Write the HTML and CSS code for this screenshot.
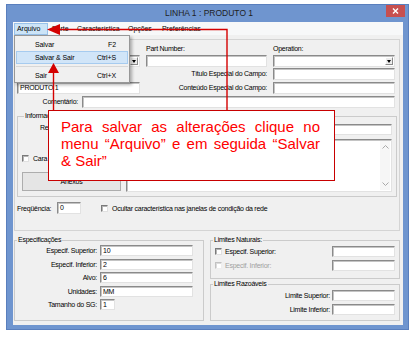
FILE: index.html
```html
<!DOCTYPE html>
<html lang="pt-BR">
<head>
    <meta charset="UTF-8">
    <title>LINHA 1 : PRODUTO 1</title>
    <link rel="stylesheet" href="styles.css">
</head>
<body>
<div class="window">
    <div class="titlebar">
        <div class="title">LINHA 1 : PRODUTO 1</div>
        <div class="close">
            <svg width="19" height="12" viewBox="0 0 19 12"><path d="M7 3.5L12 8.5M12 3.5L7 8.5" stroke="#fff" stroke-width="1.4"/></svg>
        </div>
    </div>
    <div class="client">
        <div class="menubar">
            <span class="mi mi-open">Arquivo</span>
            <span class="mi" style="width: 25px;">Parte</span>
            <span class="mi" style="width: 51px;">Característica</span>
            <span class="mi" style="width: 34px;">Opções</span>
            <span class="mi" style="width: 47px;">Preferências</span>
        </div>

        <!-- menu Arquivo aberto -->
        <div class="menu">
            <div class="item"><span>Salvar</span><span>F2</span></div>
            <div class="item on"><span>Salvar &amp; Sair</span><span>Ctrl+S</span></div>
            <div class="sep"></div>
            <div class="item"><span>Sair</span><span>Ctrl+X</span></div>
        </div>

        <div class="panel">
            <div class="grid3 labels"><span></span><span>Part Number:</span><span>Operation:</span></div>
            <div class="grid3 fields">
                <div class="edit combo"><span class="cbtn"></span></div>
                <div class="edit"></div>
                <div class="edit combo"><span class="cbtn"></span></div>
            </div>
            <div class="grid3 fields tight">
                <span></span>
                <span class="lbl-r">Título Especial do Campo:</span>
                <div class="edit"></div>
            </div>
            <div class="grid3 fields">
                <div class="edit">PRODUTO 1</div>
                <span class="lbl-r">Conteúdo Especial do Campo:</span>
                <div class="edit"></div>
            </div>
            <div class="comment-row">
                <span class="lbl-r">Comentário:</span>
                <div class="edit"></div>
            </div>

            <fieldset class="info">
                <legend>Informações</legend>
                <div class="info-grid">
                    <!-- o balão cobre o resto destes textos -->
                    <div class="info-left">
                        <span class="rlabel">Re</span>
                        <div class="ck-row"><span class="check"></span><span class="ck-text">Cara</span></div>
                        <div class="btn">Anexos</div>
                    </div>
                    <div class="info-right">
                        <div class="edit short"></div>
                        <div class="edit memo">
                            <div class="vscroll">
                                <svg width="7" height="4" viewBox="0 0 7 4"><polyline points="0.5,3.5 3.5,0.5 6.5,3.5" fill="none" stroke="#a8a8a8"/></svg>
                                <svg width="7" height="4" viewBox="0 0 7 4"><polyline points="0.5,0.5 3.5,3.5 6.5,0.5" fill="none" stroke="#a8a8a8"/></svg>
                            </div>
                        </div>
                    </div>
                </div>
            </fieldset>

            <div class="freq">
                <span class="flabel">Freqüência:</span>
                <div class="edit">0</div>
                <span class="check"></span>
                <span class="ck-text">Ocultar característica nas janelas de condição da rede</span>
            </div>
        </div>

        <div class="bottom">
            <fieldset class="specs">
                <legend>Especificações</legend>
                <div class="spec-grid">
                    <span>Especif. Superior:</span><div class="edit">10</div>
                    <span>Especif. Inferior:</span><div class="edit">2</div>
                    <span>Alvo:</span><div class="edit">6</div>
                    <span>Unidades:</span><div class="edit">MM</div>
                    <span>Tamanho do SG:</span><div class="edit sg">1</div>
                </div>
            </fieldset>
            <div class="limits">
                <fieldset class="nat">
                    <legend>Limites Naturais:</legend>
                    <div class="lim-row"><span class="check"></span><span class="ck-text">Especif. Superior:</span><div class="edit"></div></div>
                    <div class="lim-row off"><span class="check"></span><span class="ck-text">Especif. Inferior:</span><div class="edit"></div></div>
                </fieldset>
                <fieldset class="raz">
                    <legend>Limites Razoáveis</legend>
                    <div class="lim-row"><span class="rl">Limite Superior:</span><div class="edit"></div></div>
                    <div class="lim-row"><span class="rl">Limite Inferior:</span><div class="edit"></div></div>
                </fieldset>
            </div>
        </div>
    </div>
</div>

<div class="callout">Para salvar as alterações clique no menu “Arquivo” e em seguida “Salvar &amp; Sair”</div>

<svg class="arrows" width="417" height="339" viewBox="0 0 417 339">
    <path d="M227 110V29.5H59" fill="none" stroke="#d40000" stroke-width="1.4"/>
    <polygon points="47,29.5 60,24 60,35" fill="#d40000"/>
    <path d="M53.5 110V72" fill="none" stroke="#d40000" stroke-width="1.4"/>
    <polygon points="53.5,63 48,73 59,73" fill="#d40000"/>
</svg>
</body>
</html>
```

FILE: styles.css
```css
body {
    margin: 0;
    background: #fff;
    font-family: "Liberation Sans", Arial, sans-serif;
    font-size: 7px;
    letter-spacing: -0.25px;
    color: #000;
}

/* janela */
.window {
    box-sizing: border-box;
    width: 403px;
    height: 326px;
    margin: 4px 0 0 6px;
    background: #6f95cf;
    border: 1px solid #5a7fbd;
    display: flex;
    flex-direction: column;
}
.titlebar {
    display: flex;
    height: 17px;
    flex: none;
}
.title {
    flex: 1;
    padding-left: 25px;
    text-align: center;
    font-size: 8.5px;
    letter-spacing: 0;
    line-height: 17px;
    color: #1e1e1e;
}
.close {
    width: 19px;
    height: 12px;
    margin-right: 3px;
    background: #c75050;
    display: flex;
}
.client {
    position: relative;
    flex: 1;
    margin: 0 5px 4px 6px;
    background: #f0f0f0;
}

/* menu */
.menubar {
    display: flex;
    height: 13px;
    background: #f7f8f9;
    letter-spacing: -0.05px;
    line-height: 13px;
}
.mi {
    box-sizing: border-box;
    padding-left: 4px;
}
.mi-open {
    width: 34px;
    height: 12px;
    margin: 1px 0 0 1px;
    padding-left: 2px;
    background: #cce4f7;
    border: 1px solid #99c2ea;
    line-height: 10px;
}
.menu {
    position: absolute;
    left: 1px;
    top: 13px;
    width: 116px;
    box-sizing: border-box;
    border: 1px solid #979797;
    background: #f0f0f0;
    padding: 2px 1px 0;
    box-shadow: 2px 2px 3px rgba(0, 0, 0, 0.3);
    letter-spacing: -0.1px;
    z-index: 5;
}
.item {
    display: flex;
    justify-content: space-between;
    height: 13px;
    line-height: 13px;
    padding: 0 12px 0 19px;
}
.item.on {
    background: #d1e5f8;
    box-shadow: inset 0 0 0 1px #a6cbef;
}
.sep {
    height: 1px;
    margin: 2px 0;
    background: #d7d7d7;
}

/* painel superior */
.panel {
    box-sizing: border-box;
    width: 386px;
    height: 192px;
    margin: 4px 0 0 1px;
    padding: 4px 0 0 2px;
    border: 1px solid #d4d4d4;
}
.grid3 {
    display: grid;
    grid-template-columns: 123px 121px 122px;
    column-gap: 6px;
}
.labels {
    height: 9px;
    line-height: 9px;
}
.fields {
    height: 12px;
    margin-top: 2px;
}
.fields.tight {
    margin-top: 1px;
}
.lbl-r {
    text-align: right;
    line-height: 12px;
    white-space: nowrap;
}
.edit {
    box-sizing: border-box;
    height: 12px;
    background: #fff;
    border: 1px solid;
    border-color: #8a8a8a #e2e2e2 #e2e2e2 #8a8a8a;
    box-shadow: inset 1px 1px 0 #c4c4c4;
    padding-left: 2px;
    line-height: 10px;
    white-space: nowrap;
    overflow: hidden;
}
.combo {
    display: flex;
    justify-content: flex-end;
    padding: 1px;
}
.cbtn {
    width: 8px;
    box-sizing: border-box;
    background: #ececec;
    border: 1px solid;
    border-color: #fff #8a8a8a #8a8a8a #fff;
    display: flex;
    align-items: center;
    justify-content: center;
}
.cbtn::before {
    content: "";
    border-left: 2.5px solid transparent;
    border-right: 2.5px solid transparent;
    border-top: 3px solid #000;
}
.comment-row {
    display: grid;
    grid-template-columns: 61px 313px;
    column-gap: 4px;
    height: 12px;
    margin-top: 2px;
}

/* caixas de grupo */
fieldset {
    box-sizing: border-box;
    margin: 0;
    padding: 0;
    min-width: 0;
    border: 1px solid #cbcbcb;
}
legend {
    height: 8px;
    line-height: 8px;
    padding: 0 1px;
    margin-left: 2px;
}
.check {
    flex: none;
    width: 7px;
    height: 7px;
    box-sizing: border-box;
    background: #fff;
    border: 1px solid;
    border-color: #7a7a7a #e0e0e0 #e0e0e0 #7a7a7a;
    box-shadow: inset 1px 1px 0 #b4b4b4;
}
.ck-text {
    white-space: nowrap;
}

.info {
    width: 380px;
    margin-top: 4px;
    padding: 4px;
}
.info-grid {
    display: grid;
    grid-template-columns: 99px 266px;
    column-gap: 5px;
}
.info-left {
    display: flex;
    flex-direction: column;
}
.rlabel {
    margin-left: 18px;
    height: 8px;
    line-height: 8px;
}
.ck-row {
    display: flex;
    align-items: center;
    height: 8px;
    margin-top: 22px;
}
.ck-row .ck-text {
    margin-left: 4px;
}
.btn {
    box-sizing: border-box;
    height: 19px;
    margin-top: 10px;
    border: 1px solid #adadad;
    background: #e5e5e5;
    display: flex;
    align-items: center;
    justify-content: center;
}
.edit.short {
    height: 11px;
}
.memo {
    height: 53px;
    margin-top: 4px;
    padding: 0;
    display: flex;
    justify-content: flex-end;
}
.vscroll {
    width: 10px;
    margin: 1px;
    padding: 4px 0;
    box-sizing: border-box;
    background: #f6f6f6;
    display: flex;
    flex-direction: column;
    justify-content: space-between;
    align-items: center;
}
.freq {
    display: flex;
    align-items: center;
    height: 12px;
    margin-top: 5px;
}
.flabel {
    width: 40px;
}
.freq .edit {
    width: 24px;
}
.freq .check {
    margin-left: 20px;
}
.freq .ck-text {
    margin-left: 4px;
}

/* parte inferior */
.bottom {
    display: flex;
    gap: 6px;
    margin: 5px 0 0 1px;
}
.specs {
    width: 190px;
    height: 85px;
}
.spec-grid {
    display: grid;
    grid-template-columns: 79px 93px;
    grid-auto-rows: 11px;
    row-gap: 2.6px;
    column-gap: 3px;
    padding: 1px 0 0 3px;
}
.spec-grid span {
    text-align: right;
    line-height: 11px;
}
.spec-grid .edit {
    height: 11px;
    line-height: 9px;
}
.spec-grid .sg {
    width: 15px;
}
.limits {
    width: 190px;
    display: flex;
    flex-direction: column;
    gap: 1px;
}
.nat {
    height: 43px;
    padding-top: 2px;
}
.raz {
    height: 41px;
    padding-top: 2px;
}
.lim-row {
    display: flex;
    align-items: center;
    height: 11px;
}
.lim-row + .lim-row {
    margin-top: 3px;
}
.lim-row .check {
    margin-left: 4px;
}
.lim-row .ck-text {
    margin-left: 3px;
}
.lim-row .edit {
    width: 63px;
    height: 11px;
    margin-left: auto;
    margin-right: 4px;
}
.lim-row .rl {
    margin-left: auto;
    margin-right: 2px;
}
.lim-row .rl + .edit {
    margin-left: 0;
}
.off .ck-text {
    color: #a0a0a0;
}
.off .check {
    border-color: #c2c2c2 #eee #eee #c2c2c2;
    box-shadow: inset 1px 1px 0 #dcdcdc;
}

/* balão de instrução */
.callout {
    position: absolute;
    left: 48px;
    top: 110px;
    width: 287px;
    height: 71px;
    box-sizing: border-box;
    padding: 7px 14px 0 12px;
    border: 1px solid #c80000;
    background: #fff;
    color: #f00;
    font-size: 15px;
    line-height: 17px;
    letter-spacing: 0;
    text-align: justify;
    z-index: 10;
}
.arrows {
    position: absolute;
    left: 0;
    top: 0;
    z-index: 11;
}
```
